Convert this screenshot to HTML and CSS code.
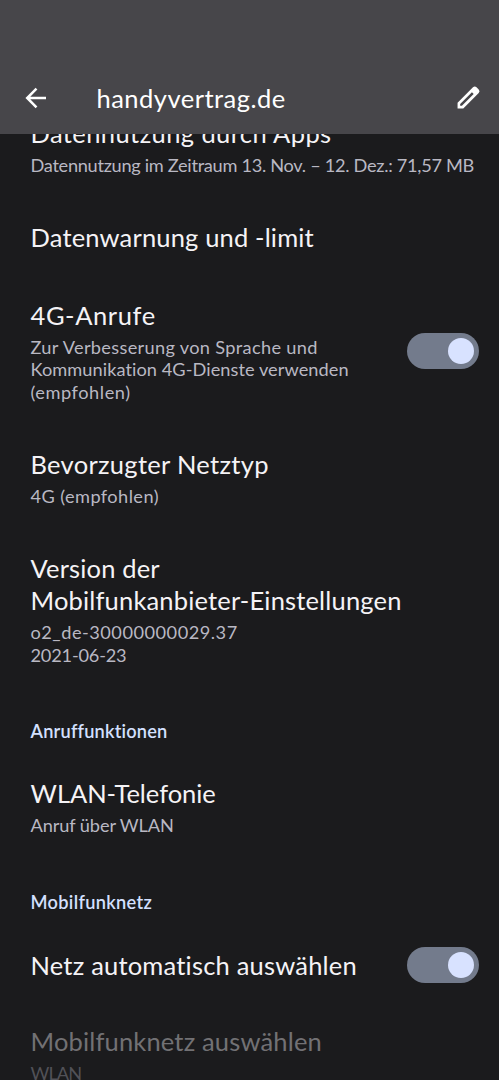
FILE: index.html
```
<!DOCTYPE html>
<html lang="de">
<head>
<meta charset="utf-8">
<title>handyvertrag.de</title>
<link rel="stylesheet" href="styles.css">
</head>
<body>
<div class="screen">
  <header class="bar">
    <svg class="back" viewBox="0 0 24 24"><path d="M22 12H4M12.500 2.700 3.200 12l9.300 9.300"/></svg>
    <h1 class="bar-title"><span class="t-bar">handyvertrag.de</span></h1>
    <svg class="edit" viewBox="0 0 24 24"><path d="M1.500 22.500V17L16.300 2.200Q18 .6 19.700 2.200L21.800 4.300Q23.400 6 21.800 7.700L7 22.500ZM4 20H5.700L17 8.700 15.300 7 4 18.300Z"/></svg>
  </header>
  <main class="list">
    <section class="item first"><div class="text">
      <div class="title"><span class="t-usage">Datennutzung durch Apps</span></div>
      <div class="sub"><span class="s-usage">Datennutzung im Zeitraum 13. Nov. – 12. Dez.: 71,57 MB</span></div>
    </div></section>
    <section class="item"><div class="text">
      <div class="title"><span class="t-limit">Datenwarnung und -limit</span></div>
    </div></section>
    <section class="item calls"><div class="text">
      <div class="title"><span class="t-calls">4G-Anrufe</span></div>
      <div class="sub"><span class="s-calls-1">Zur Verbesserung von Sprache und</span><br><span class="s-calls-2">Kommunikation 4G-Dienste verwenden</span><br><span class="s-calls-3">(empfohlen)</span></div>
    </div><div class="switch"><div class="thumb"></div></div></section>
    <section class="item"><div class="text">
      <div class="title"><span class="t-type">Bevorzugter Netztyp</span></div>
      <div class="sub"><span class="s-type">4G (empfohlen)</span></div>
    </div></section>
    <section class="item"><div class="text">
      <div class="title"><span class="t-version">Version der<br>Mobilfunkanbieter-Einstellungen</span></div>
      <div class="sub"><span class="s-version">o2_de-30000000029.37</span><br><span class="s-date">2021-06-23</span></div>
    </div></section>
    <h2 class="category"><span class="c-calls">Anruffunktionen</span></h2>
    <section class="item"><div class="text">
      <div class="title"><span class="t-wifi">WLAN-Telefonie</span></div>
      <div class="sub"><span class="s-wifi">Anruf über WLAN</span></div>
    </div></section>
    <h2 class="category"><span class="c-net">Mobilfunknetz</span></h2>
    <section class="item auto"><div class="text">
      <div class="title"><span class="t-auto">Netz automatisch auswählen</span></div>
    </div><div class="switch"><div class="thumb"></div></div></section>
    <section class="item disabled"><div class="text">
      <div class="title"><span class="t-select">Mobilfunknetz auswählen</span></div>
      <div class="sub"><span class="s-select">WLAN</span></div>
    </div></section>
  </main>
</div>
</body>
</html>
```
FILE: styles.css
```
* { box-sizing: border-box; }
body { margin: 0; background: #1b1b1d; font-family: Lato, "Open Sans", sans-serif; font-variant-ligatures: none; }
.screen { height: 1080px; display: flex; flex-direction: column; overflow: hidden; color: #f5f3f6; }
.bar { flex: none; height: 134px; padding: 81px 18px 20px 24px; background: #47464a; display: flex; align-items: center; color: #fff; }
.back { width: 24px; height: 24px; fill: none; stroke: currentColor; stroke-width: 2.500; }
.bar-title { flex: 1; margin: 0 0 0 48.500px; font-size: 25.500px; font-weight: 400; line-height: 32px; white-space: nowrap; }
.edit { width: 25px; height: 25px; fill: currentColor; fill-rule: evenodd; }
.list { flex: 1; min-height: 0; overflow: hidden; }
.item { display: flex; align-items: center; justify-content: space-between; padding: 22.300px 20px 22.300px 30.500px; }
.first { margin-top: -39px; }
.calls { padding-top: 23.300px; }
.auto { padding-bottom: 20px; }
.text { white-space: nowrap; }
.title { font-size: 25.500px; line-height: 32px; }
.sub { margin-top: 5px; font-size: 18.200px; line-height: 22.500px; color: #b9b8c3; }
.category { margin: 0; height: 66px; padding: 32px 30.500px 0; font-size: 18.200px; line-height: 22.500px; font-weight: 600; color: #d3e0ff; }
.switch { flex: none; width: 72px; height: 36px; border-radius: 18px; background: #737b8c; padding: 5px; display: flex; justify-content: flex-end; }
.thumb { width: 26px; height: 26px; border-radius: 50%; background: #d8e2ff; }
.disabled .title { color: #727174; }
.disabled .sub { color: #515157; }

/* Tracking per label */
.t-bar { letter-spacing: .48px; }
.t-usage { letter-spacing: .4px; }
.s-usage { letter-spacing: -.3px; }
.t-limit { letter-spacing: .16px; }
.t-calls { letter-spacing: .6px; }
.s-calls-1 { letter-spacing: .32px; }
.s-calls-2 { letter-spacing: .06px; }
.s-calls-3 { letter-spacing: .55px; }
.t-type { letter-spacing: .3px; }
.s-type { letter-spacing: .42px; }
.t-version { letter-spacing: .17px; }
.s-version { letter-spacing: .5px; }
.s-date { letter-spacing: -.2px; }
.c-calls { letter-spacing: .2px; }
.t-wifi { letter-spacing: -.03px; }
.s-wifi { letter-spacing: -.1px; }
.c-net { letter-spacing: .32px; }
.t-auto { letter-spacing: .2px; }
.t-select { letter-spacing: .16px; }
.s-select { letter-spacing: -.9px; }
```
